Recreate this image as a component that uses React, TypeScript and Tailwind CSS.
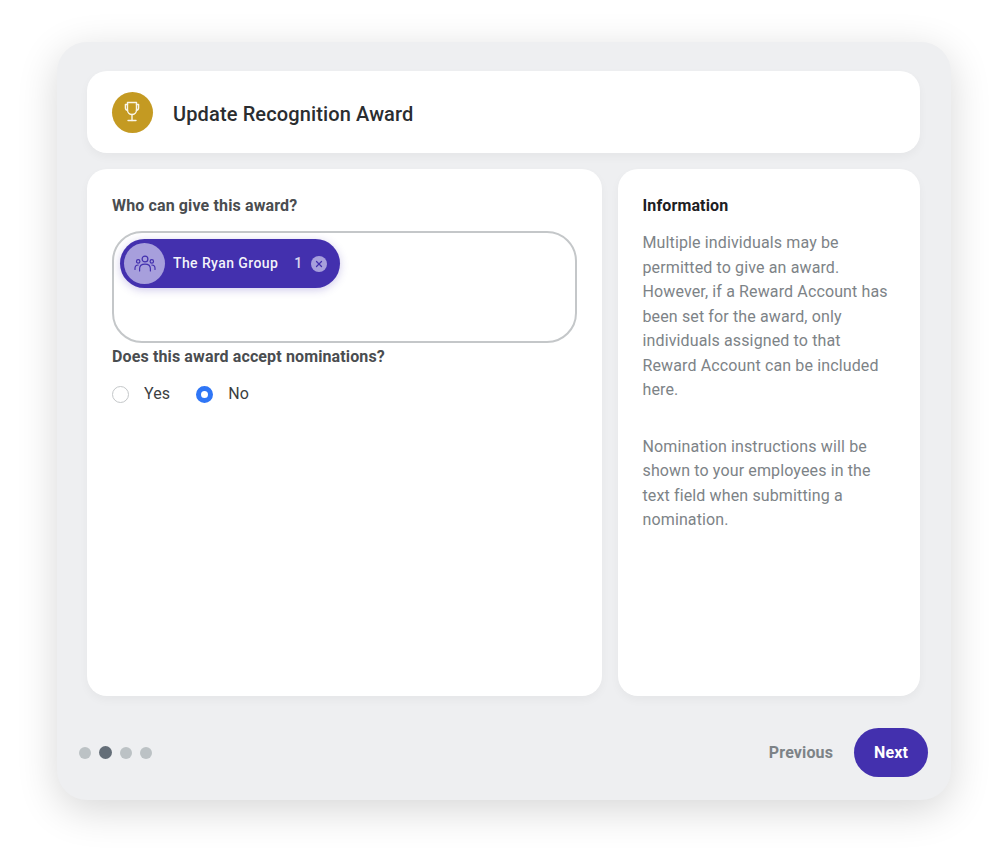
import { X } from "lucide-react";

const font = { fontFamily: "Roboto, sans-serif" };

function Trophy() {
  return (
    <svg width="22" height="24" viewBox="0 0 22 24" fill="none" stroke="#fff" strokeWidth="1.4" strokeLinecap="round" strokeLinejoin="round" opacity="0.9" className="mr-[1px]">
      <path d="M6.5 2.5h9v7.5a4.5 4.5 0 0 1-9 0z" />
      <path d="M6.5 4.5H4.4v3.2a2.6 2.6 0 0 0 2.1 2.6" />
      <path d="M15.5 4.5h2.1v3.2a2.6 2.6 0 0 1-2.1 2.6" />
      <path d="M11 14.5v6" />
      <path d="M7 20.5h8" />
    </svg>
  );
}

function GroupIcon() {
  return (
    <svg width="22" height="20" viewBox="0 0 22 20" fill="none" stroke="#4330ae" strokeWidth="1.2" strokeLinecap="round" strokeLinejoin="round">
      <circle cx="11" cy="5" r="2.9" />
      <circle cx="4.2" cy="7.4" r="1.7" />
      <circle cx="17.8" cy="7.4" r="1.7" />
      <path d="M5.6 17v-2.2c0-3 2.4-4.6 5.4-4.6s5.4 1.6 5.4 4.6V17" />
      <path d="M1 15.5v-1.2c0-2 1.3-3.3 3.2-3.3" />
      <path d="M21 15.5v-1.2c0-2-1.3-3.3-3.2-3.3" />
    </svg>
  );
}

export default function App() {
  return (
    <div className="w-[1007px] h-[854px] bg-white pt-[42px] pl-[57px] overflow-hidden tracking-[0.13px]" style={font}>
      <div className="w-[894px] h-[758px] bg-[#eeeff1] rounded-[30px] shadow-[0_10px_40px_rgba(0,0,0,0.16)] flex flex-col">
        <div className="pt-[29px] px-[30px] pr-[31px] flex flex-col gap-4">
          {/* header */}
          <div className="h-[82px] bg-white rounded-[20px] flex items-center pl-[25px] gap-[20px] shadow-[0_4px_10px_rgba(0,0,0,0.04)]">
            <div className="w-[41px] h-[41px] rounded-full bg-[#c49a22] flex items-center justify-center">
              <Trophy />
            </div>
            <h1 className="mt-[4px] text-[20px] font-medium text-[#2a2d30] leading-none">Update Recognition Award</h1>
          </div>

          <div className="flex gap-4 h-[527px]">
            {/* form */}
            <div className="w-[515px] bg-white rounded-[20px] pt-[27px] px-[25px] shadow-[0_4px_10px_rgba(0,0,0,0.04)]">
              <p className="text-[16px] leading-[20px] font-bold text-[#4a4d50]">Who can give this award?</p>
              <div className="mt-[15px] w-[465px] h-[112px] rounded-[30px] border-2 border-[#c4c7c9] pt-[6px] pl-[6px]">
                <div className="w-[220px] h-[49px] rounded-full bg-[#4330ae] flex items-center pl-[4px] shadow-[0_2px_8px_rgba(67,48,174,0.25)]">
                  <div className="w-[41px] h-[41px] rounded-full bg-[#a79fdc] flex items-center justify-center">
                    <GroupIcon />
                  </div>
                  <span className="ml-[8px] text-[14px] font-medium tracking-[0.4px] text-white/95">The Ryan Group</span>
                  <span className="ml-[16px] text-[14px] font-medium text-white/80">1</span>
                  <span className="ml-[9px] w-[16px] h-[16px] rounded-full bg-[#a79fdc] flex items-center justify-center">
                    <X size={10} strokeWidth={3} color="#4330ae" />
                  </span>
                </div>
              </div>
              <p className="mt-[4px] text-[16px] leading-[20px] font-bold text-[#4a4d50]">Does this award accept nominations?</p>
              <div className="mt-[17px] flex items-center h-[20px] text-[16px] text-[#3b3e41]">
                <span className="w-[17px] h-[17px] rounded-full border border-[#c4c7c9] bg-white" />
                <span className="ml-[15px]">Yes</span>
                <span className="ml-[26px] w-[17px] h-[17px] rounded-full border-[5px] border-[#2f76f6] bg-white" />
                <span className="ml-[15px]">No</span>
              </div>
            </div>

            {/* information */}
            <div className="flex-1 bg-white rounded-[20px] pt-[27px] pl-[24.5px] pr-[25px] shadow-[0_4px_10px_rgba(0,0,0,0.04)]">
              <p className="text-[16px] leading-[20px] font-bold text-[#1d2023]">Information</p>
              <p className="mt-[15px] text-[16px] leading-[24.5px] text-[#7d8387]">
                Multiple individuals may be permitted to give an award. However, if a Reward Account has been set for the award, only individuals assigned to that Reward Account can be included here.
              </p>
              <p className="mt-[32px] text-[16px] leading-[24.5px] text-[#7d8387]">
                Nomination instructions will be shown to your employees in the text field when submitting a nomination.
              </p>
            </div>
          </div>
        </div>

        {/* footer */}
        <div className="mt-[32px] pl-[22px] pr-[23px] flex items-center justify-between">
          <div className="flex items-center gap-[8px]">
            <span className="w-[12px] h-[12px] rounded-full bg-[#bcc2c5]" />
            <span className="w-[13px] h-[13px] rounded-full bg-[#646e78]" />
            <span className="w-[12px] h-[12px] rounded-full bg-[#bcc2c5]" />
            <span className="w-[12px] h-[12px] rounded-full bg-[#bcc2c5]" />
          </div>
          <div className="flex items-center gap-[21px]">
            <span className="text-[16px] font-bold text-[#7d8387] -ml-[1px]">Previous</span>
            <button className="w-[74px] h-[49px] rounded-full bg-[#4330ae] text-white text-[16px] font-bold">Next</button>
          </div>
        </div>
      </div>
    </div>
  );
}
